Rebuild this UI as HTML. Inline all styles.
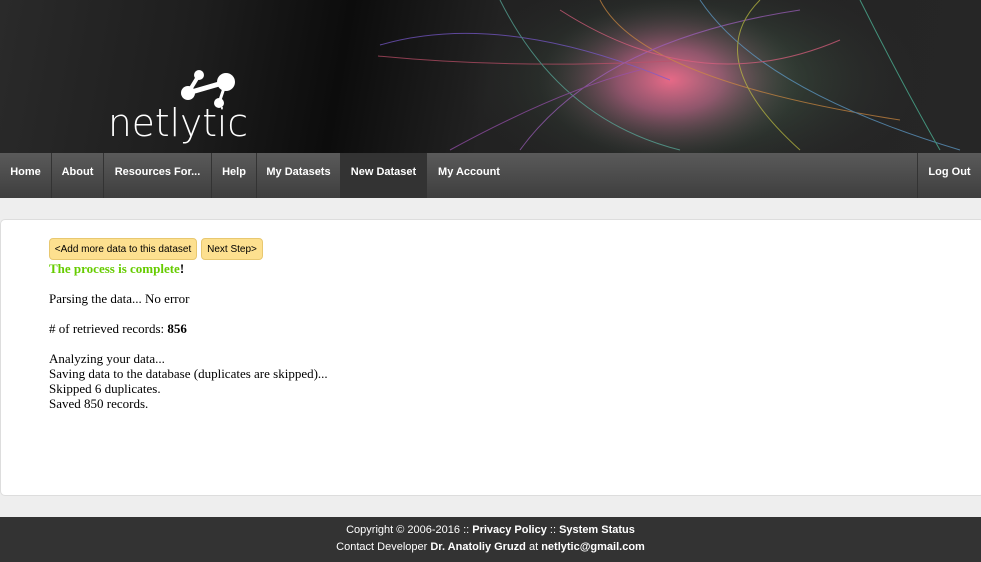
<!DOCTYPE html>
<html><head><style>
body{margin:0;width:981px;height:562px;background:#eee;font-family:"Liberation Sans",sans-serif;overflow:hidden;position:relative}
#hdr{position:absolute;left:0;top:0;width:981px;height:153px;background:linear-gradient(100deg,#2a2a2a 0%,#1e1e1e 20%,#0c0c0c 35%,#222 50%,#262626 100%);overflow:hidden}
#nav{position:absolute;left:0;top:153px;width:981px;height:45px;background:linear-gradient(#5a5a5a,#3e3e3e)}
#nav a{position:absolute;top:0;height:45px;line-height:38px;color:#fff;font-weight:bold;font-size:11px;text-align:center;border-right:1px solid #333;box-sizing:border-box}
#panel{position:absolute;left:0;top:219px;width:985px;height:277px;background:#fff;border:1px solid #ddd;border-radius:5px;box-sizing:border-box}
.btn{position:absolute;top:238px;height:22px;background:#fde08f;border:1px solid #e8c870;border-radius:4px;font-size:10px;line-height:22px;text-align:center;box-sizing:border-box}
.t{position:absolute;left:49px;font-family:"Liberation Serif",serif;font-size:13px;color:#000}
#ftr{position:absolute;left:0;top:517px;width:981px;height:45px;background:#333;color:#fff;font-size:11px;text-align:center;line-height:17px;padding-top:5px;box-sizing:border-box}
</style></head><body>
<div id="hdr">
<svg width="981" height="153" style="position:absolute;left:0;top:0">
<defs><radialGradient id="g" cx="50%" cy="50%" r="50%"><stop offset="0" stop-color="#f06a8a" stop-opacity=".95"/><stop offset=".4" stop-color="#c85c8a" stop-opacity=".6"/><stop offset="1" stop-color="#444" stop-opacity="0"/></radialGradient>
<radialGradient id="g2" cx="50%" cy="50%" r="50%"><stop offset="0" stop-color="#6bb07a" stop-opacity=".5"/><stop offset="1" stop-color="#333" stop-opacity="0"/></radialGradient></defs>
<ellipse cx="690" cy="80" rx="230" ry="110" fill="url(#g2)"/>
<ellipse cx="670" cy="80" rx="130" ry="80" fill="url(#g)"/>
<g fill="none" stroke-width="1" opacity=".7">
<path d="M380 45 Q500 10 670 80" stroke="#7a5ad0"/><path d="M378 56 Q520 70 690 60" stroke="#c0506a"/>
<path d="M500 0 Q560 120 680 150" stroke="#5ab0a0"/><path d="M600 0 Q640 80 900 120" stroke="#d08a40"/>
<path d="M520 150 Q600 40 800 10" stroke="#a060c0"/><path d="M700 0 Q760 90 960 150" stroke="#60a0d0"/>
<path d="M450 150 Q560 90 640 70" stroke="#9a50b0"/><path d="M800 150 Q700 60 760 0" stroke="#c0c040"/>
<path d="M560 10 Q700 100 840 40" stroke="#e06080"/><path d="M860 0 Q900 80 940 150" stroke="#50c0a0"/>
</g>
</svg>
<svg width="160" height="85" style="position:absolute;left:100px;top:65px">
<line x1="99" y1="10" x2="88" y2="28" stroke="#fff" stroke-width="4"/>
<line x1="88" y1="28" x2="126" y2="17" stroke="#fff" stroke-width="5"/>
<line x1="126" y1="17" x2="119" y2="38" stroke="#fff" stroke-width="3"/>
<circle cx="99" cy="10" r="5" fill="#fff"/><circle cx="88" cy="28" r="7" fill="#fff"/>
<circle cx="126" cy="17" r="9" fill="#fff"/><circle cx="119" cy="38" r="5" fill="#fff"/>
<text x="8" y="71" fill="#fff" font-family="DejaVu Sans,sans-serif" font-weight="200" font-size="38" textLength="140" lengthAdjust="spacingAndGlyphs">netlytic</text>
</svg>
</div>
<div id="nav">
<a style="left:0;width:52px">Home</a>
<a style="left:52px;width:52px">About</a>
<a style="left:104px;width:108px">Resources For...</a>
<a style="left:212px;width:45px">Help</a>
<a style="left:257px;width:84px">My Datasets</a>
<a style="left:341px;width:86px;background:#333">New Dataset</a>
<a style="left:427px;width:84px;border-right:none">My Account</a>
<a style="left:917px;width:64px;border-left:1px solid #333;border-right:none">Log Out</a>
</div>
<div id="panel"></div>
<div class="btn" style="left:49px;width:148px">&lt;Add more data to this dataset</div>
<div class="btn" style="left:201px;width:62px">Next Step&gt;</div>
<div class="t" style="top:261px;font-weight:bold;color:#66cc00">The process is complete<span style="color:#000">!</span></div>
<div class="t" style="top:291px">Parsing the data... No error</div>
<div class="t" style="top:321px"># of retrieved records: <b>856</b></div>
<div class="t" style="top:351px;line-height:15px">Analyzing your data...<br>Saving data to the database (duplicates are skipped)...<br>Skipped 6 duplicates.<br>Saved 850 records.</div>
<div id="ftr">Copyright © 2006-2016 :: <b>Privacy Policy</b> :: <b>System Status</b><br>Contact Developer <b>Dr. Anatoliy Gruzd</b> at <b>netlytic@gmail.com</b></div>
</body></html>
